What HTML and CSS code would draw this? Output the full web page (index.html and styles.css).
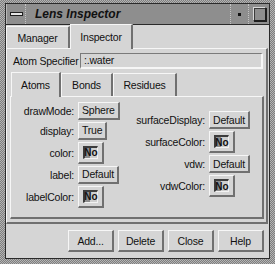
FILE: index.html
```html
<!DOCTYPE html>
<html lang="en">
<head>
  <meta charset="UTF-8" />
  <meta name="viewport" content="width=device-width, initial-scale=1.0" />
  <title>Lens Inspector</title>
  <link rel="stylesheet" href="styles.css">
</head>
<body>
  <div class="frame">
    <div class="window">
      <div class="titlebar">
        <div class="tb-btn menu"><span class="dash"></span></div>
        <div class="title">Lens Inspector</div>
        <div class="tb-btn min"><span class="dot"></span></div>
        <div class="tb-btn max"><span class="square"></span></div>
      </div>

      <div class="client">
        <div class="tabs top">
          <div class="tab w-manager">Manager</div>
          <div class="tab active w-inspector">Inspector</div>
        </div>

        <div class="panel outer">
          <div class="spec">
            <span class="spec-label">Atom Specifier</span>
            <div class="field">:.water</div>
          </div>

          <div class="tabs inner">
            <div class="tab active w-atoms">Atoms</div>
            <div class="tab w-bonds">Bonds</div>
            <div class="tab w-residues">Residues</div>
          </div>

          <div class="panel attrs">
            <div class="col left">
              <span class="lbl">drawMode:</span><div class="btn">Sphere</div>
              <span class="lbl">display:</span><div class="btn">True</div>
              <span class="lbl">color:</span><div class="swatch"><span class="well">No</span></div>
              <span class="lbl">label:</span><div class="btn">Default</div>
              <span class="lbl">labelColor:</span><div class="swatch"><span class="well">No</span></div>
            </div>
            <div class="col right">
              <span class="lbl">surfaceDisplay:</span><div class="btn">Default</div>
              <span class="lbl">surfaceColor:</span><div class="swatch"><span class="well">No</span></div>
              <span class="lbl">vdw:</span><div class="btn">Default</div>
              <span class="lbl">vdwColor:</span><div class="swatch"><span class="well">No</span></div>
            </div>
          </div>
        </div>

        <div class="actions">
          <div class="btn act">Add...</div>
          <div class="btn act">Delete</div>
          <div class="btn act">Close</div>
          <div class="btn act">Help</div>
        </div>
      </div>
    </div>
  </div>
</body>
</html>
```

FILE: styles.css
```css
* {
  box-sizing: border-box;
}

body {
  margin: 0;
  font-family: "Liberation Sans", Arial, sans-serif;
  font-size: 10.5px;
  letter-spacing: -0.2px;
  color: #111;
  background: #a0a0a0;
}

/* window manager frame */
.frame {
  width: 275px;
  height: 264px;
  padding: 3px 5px 5px 5px;
  background-color: #9c9c9c;
  background-image: repeating-conic-gradient(#7e7e7e 0 25%, #b4b4b4 0 50%);
  background-size: 2px 2px;
}

.window {
  width: 265px;
  height: 256px;
  border: 1px solid #2a2a2a;
  display: flex;
  flex-direction: column;
  background: #d5d5d5;
}

.titlebar {
  height: 21px;
  display: flex;
  background: #8e8e8e;
  border-bottom: 1px solid #2a2a2a;
}

.tb-btn {
  display: flex;
  align-items: center;
  justify-content: center;
}

.menu {
  width: 20px;
  border-right: 1px dotted #c4c4c4;
  border-left: 1px solid #b8b8b8;
}

.dash {
  width: 13px;
  height: 4px;
  background: #e6e6e6;
  border: 1px solid #1e1e1e;
}

.title {
  flex: 1;
  padding-left: 9px;
  font-size: 12px;
  font-weight: bold;
  font-style: italic;
  letter-spacing: 0;
  line-height: 20px;
  color: #111;
}

.min {
  width: 19px;
  border-left: 1px dotted #c4c4c4;
  border-right: 1px dotted #c4c4c4;
}

.dot {
  width: 3px;
  height: 3px;
  background: #111;
}

.max {
  width: 20px;
}

.square {
  width: 13px;
  height: 14px;
  border: 1px solid #1e1e1e;
  border-top-color: #d8d8d8;
  border-left-color: #d8d8d8;
  box-shadow: 1px 1px 0 #1e1e1e, inset 1px 1px 0 #3a3a3a;
  background: #8e8e8e;
}

/* client area */
.client {
  flex: 1;
  display: flex;
  flex-direction: column;
}

.tabs {
  display: flex;
  align-items: flex-end;
}

.tabs.top {
  height: 23px;
}

.tabs.inner {
  height: 25px;
  margin-top: 2px;
  padding-left: 1px;
}

.tab {
  height: 22px;
  display: flex;
  align-items: center;
  justify-content: center;
  background: #d5d5d5;
  border-style: solid;
  border-width: 1px 2px 0 1px;
  border-color: #f6f6f6 #707070 transparent #f6f6f6;
}

.tabs.inner .tab {
  height: 23px;
}

.tab.active,
.tabs.inner .tab.active {
  height: 25px;
  margin-bottom: -1px;
  position: relative;
  z-index: 1;
}

.w-manager { width: 64px; }
.w-inspector { width: 63px; }
.w-atoms { width: 50px; }
.w-bonds { width: 52px; }
.w-residues { width: 64px; }

.panel {
  border-style: solid;
  border-width: 1px 2px 2px 1px;
  border-color: #f6f6f6 #707070 #707070 #f6f6f6;
}

.outer {
  margin-right: 1px;
  padding: 4px 2px 3px 3px;
}

.spec {
  display: flex;
  align-items: center;
  height: 16px;
}

.spec-label {
  width: 70px;
  padding-left: 3px;
}

.field {
  flex: 1;
  height: 16px;
  margin-right: 1px;
  padding-left: 3px;
  line-height: 13px;
  border-style: solid;
  border-width: 1px 2px 2px 1px;
  border-color: #7a7a7a #f6f6f6 #f6f6f6 #7a7a7a;
}

.attrs {
  height: 123px;
  display: flex;
  align-items: center;
  padding-bottom: 5px;
}

.col {
  display: grid;
  align-items: center;
  justify-items: start;
  column-gap: 4px;
  row-gap: 2px;
}

.left {
  width: 120px;
  grid-template-columns: 63px auto;
}

.right {
  grid-template-columns: 74px auto;
  margin-top: -1px;
}

.lbl {
  justify-self: end;
}

.btn {
  height: 18px;
  padding: 0 3px;
  display: flex;
  align-items: center;
  justify-content: center;
  background: #d5d5d5;
  border-style: solid;
  border-width: 1px 2px 2px 1px;
  border-color: #f6f6f6 #707070 #707070 #f6f6f6;
}

.swatch {
  width: 26px;
  height: 22px;
  padding: 3px 4px 3px 4px;
  background: #d5d5d5;
  border-style: solid;
  border-width: 1px 2px 2px 1px;
  border-color: #f6f6f6 #707070 #707070 #f6f6f6;
}

.well {
  display: flex;
  align-items: center;
  justify-content: center;
  width: 100%;
  height: 100%;
  font-weight: bold;
  font-size: 10px;
  letter-spacing: 0;
  border-style: solid;
  border-width: 2px 1px 1px 2px;
  border-color: #3c3c3c #f2f2f2 #f2f2f2 #3c3c3c;
  background: linear-gradient(to right, #8c8c8c 0 45%, #cfcfcf 45% 100%);
}

/* bottom buttons */
.actions {
  display: flex;
  justify-content: flex-end;
  gap: 4px;
  margin-top: 6px;
  padding-right: 5px;
}

.act {
  width: 46px;
  height: 22px;
}
```
